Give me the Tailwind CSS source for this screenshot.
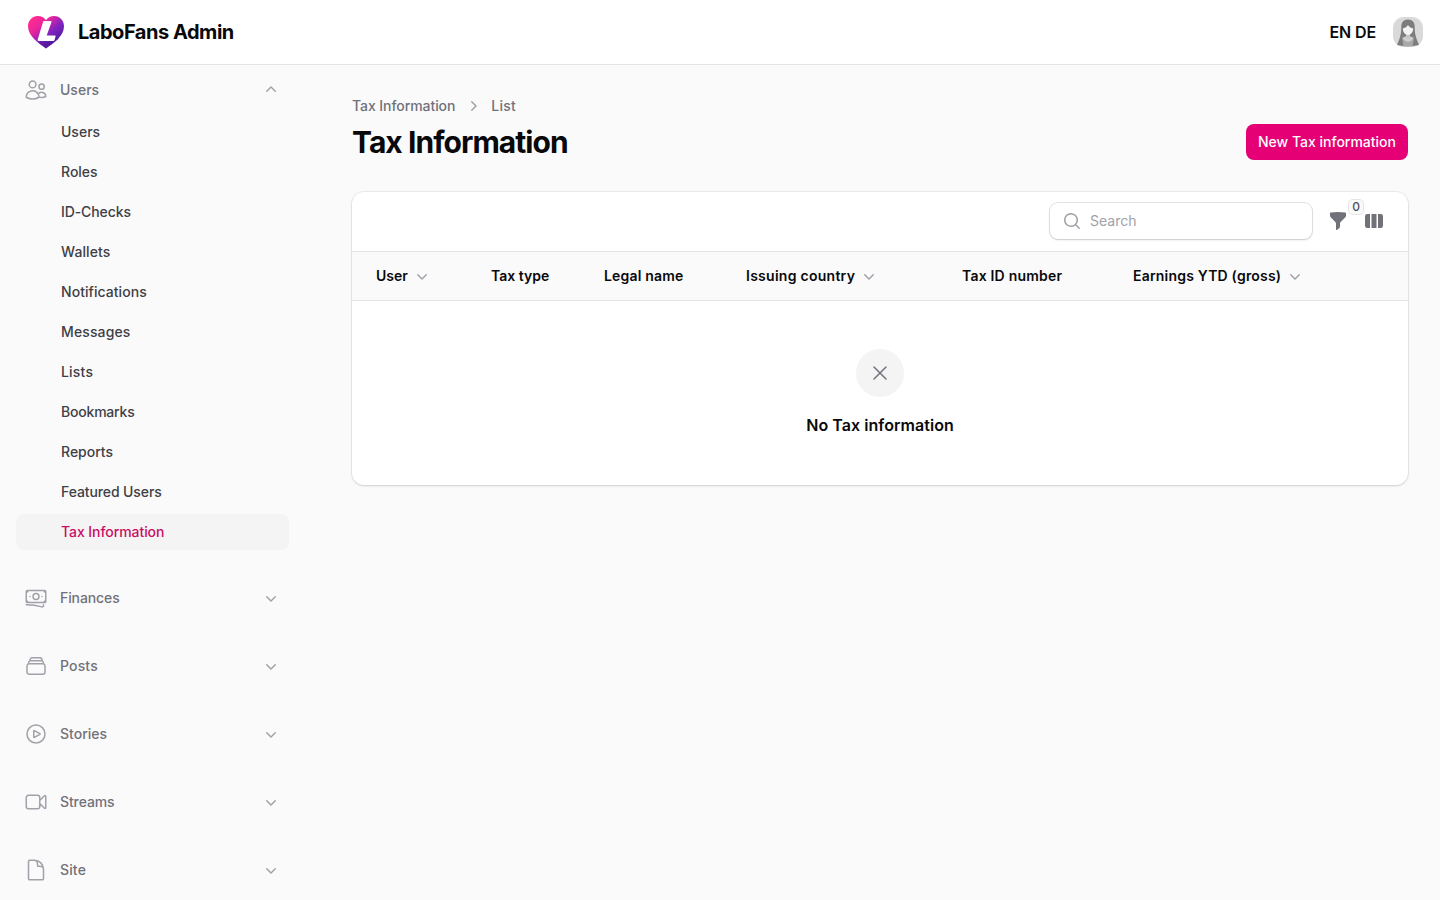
<!doctype html>
<html lang="en">
<head>
  <meta charset="UTF-8">
  <meta name="viewport" content="width=device-width, initial-scale=1.0">
  <script src="https://cdn.jsdelivr.net/npm/@tailwindcss/browser@4"></script>
  <title>Tax Information - LaboFans Admin</title>
</head>

<body class="flex h-screen flex-col overflow-hidden bg-[#fafafa] font-['Inter',sans-serif] text-[#09090b]">
  <!-- icons used more than once -->
  <svg class="hidden">
    <symbol id="chevron-down" viewBox="0 0 20 20"><path fill-rule="evenodd" d="M5.22 8.22a.75.75 0 0 1 1.06 0L10 11.94l3.72-3.72a.75.75 0 1 1 1.06 1.06l-4.25 4.25a.75.75 0 0 1-1.06 0L5.22 9.28a.75.75 0 0 1 0-1.06Z"/></symbol>
  </svg>

  <header class="z-10 flex h-[65px] shrink-0 items-center justify-between border-b border-[#e4e4e7] bg-white pr-4 pl-7">
    <a href="#" class="flex items-center gap-3.5">
      <svg class="h-[33px] w-9" viewBox="0 0 36 33">
        <defs>
          <linearGradient id="heart" x1="5" y1="3" x2="27" y2="29" gradientUnits="userSpaceOnUse">
            <stop offset="0" stop-color="#ff2b92"/>
            <stop offset=".3" stop-color="#e7269c"/>
            <stop offset=".62" stop-color="#8423c0"/>
            <stop offset="1" stop-color="#4a1d9a"/>
          </linearGradient>
        </defs>
        <path fill="url(#heart)" d="M18 32.5C11.500 27.500 0 20.500 0 10.200 0 4.300 4.300 0 9.700 0c3.500 0 6.600 1.600 8.300 4.200C19.700 1.600 22.800 0 26.300 0 31.700 0 36 4.300 36 10.200c0 10.300-11.500 17.300-18 22.300Z"/>
        <path fill="#4a1490" fill-opacity=".4" d="m10 25.500 17.500-.5 1.500-4 2 1.500C27.500 26 22.500 29.300 18 32.500c-2-1.500-5-3.600-8-5.900Z"/>
        <path fill="#fff" d="M16.300 5h6.200c1 0 1.200.5.900 1.300L18.700 19.500h7.800c.9 0 1.300.5 1 1.300l-.9 2.900c-.3.800-.8 1.300-1.700 1.300H11.200c-1.300 0-1.800-.6-1.400-1.700L15 6c.3-.7.600-1 1.300-1Z"/>
      </svg>
      <span class="text-xl leading-5 font-bold tracking-[-0.47px]">LaboFans Admin</span>
    </a>
    <div class="flex items-center gap-4">
      <span class="text-base font-semibold tracking-[-0.1px]">EN DE</span>
      <svg class="size-8" viewBox="0 0 32 32">
        <rect x="1" y="1" width="30" height="30" rx="11" fill="#d9d9d9"/>
        <path fill="#7d7d7d" d="M16 3.500c-4.500 0-6.700 3-6.700 7 0 4-.3 7.500-1.300 10.500-.8 2.500-1.500 5-3 7.500 3 2.200 19 2.200 22 0-1.500-2.500-2.200-5-3-7.500-1-3-1.300-6.500-1.300-10.500 0-4-2.200-7-6.700-7Z"/>
        <path fill="#a9a9a9" d="M10 21.500 14 20h4l4 1.500-1.500 9h-9Z"/>
        <path fill="#cfcfcf" d="M11 22c1.500 5 8.500 5 10 0l-3-1.500h-4Z"/>
        <path fill="#c4c4c4" d="M14 17h4v4.500c-1 1.500-3 1.500-4 0Z"/>
        <path fill="#f3f3f3" d="M16 9c-1 2-3 3-5.200 3.500 0 3.500 2.200 6.500 5.200 6.500s5.200-3 5.200-6.500C19 12 17 11 16 9Z"/>
      </svg>
    </div>
  </header>

  <div class="flex min-h-0 flex-1">
    <aside class="w-80 shrink-0 overflow-hidden pt-[5px] pr-[31px] pl-4">
      <nav class="flex flex-col gap-7 text-sm font-medium">
        <div class="flex flex-col gap-1">
          <div class="flex items-center gap-3 p-2 text-[#71717a]">
            <svg class="size-6 text-[#a1a1aa]" fill="none" stroke="currentColor" stroke-width="1.5" stroke-linecap="round" stroke-linejoin="round" viewBox="0 0 24 24"><path d="M15 19.128a9.380 9.380 0 0 0 2.625.372 9.337 9.337 0 0 0 4.121-.952 4.125 4.125 0 0 0-7.533-2.493M15 19.128v-.003c0-1.113-.285-2.160-.786-3.070M15 19.128v.106A12.318 12.318 0 0 1 8.624 21c-2.331 0-4.512-.645-6.374-1.766l-.001-.109a6.375 6.375 0 0 1 11.964-3.070M12 6.375a3.375 3.375 0 1 1-6.750 0 3.375 3.375 0 0 1 6.750 0Zm8.250 2.250a2.625 2.625 0 1 1-5.250 0 2.625 2.625 0 0 1 5.250 0Z"/></svg>
            <span class="flex-1">Users</span>
            <svg class="size-5 text-[#a1a1aa]" fill="currentColor" viewBox="0 0 20 20"><path d="M9.470 6.470a.75.75 0 0 1 1.060 0l4.250 4.250a.75.75 0 1 1-1.060 1.060L10 8.060l-3.720 3.720a.75.75 0 0 1-1.060-1.060l4.250-4.250Z"/></svg>
          </div>
          <ul class="flex flex-col gap-1 text-[#3f3f46]">
            <li class="rounded-lg py-2 pl-[45px]">Users</li>
            <li class="rounded-lg py-2 pl-[45px]">Roles</li>
            <li class="rounded-lg py-2 pl-[45px] tracking-[-0.1px]">ID-Checks</li>
            <li class="rounded-lg py-2 pl-[45px] tracking-[0.1px]">Wallets</li>
            <li class="rounded-lg py-2 pl-[45px] tracking-[0.05px]">Notifications</li>
            <li class="rounded-lg py-2 pl-[45px] tracking-[0.12px]">Messages</li>
            <li class="rounded-lg py-2 pl-[45px] tracking-[0.2px]">Lists</li>
            <li class="rounded-lg py-2 pl-[45px] tracking-[-0.2px]">Bookmarks</li>
            <li class="rounded-lg py-2 pl-[45px]">Reports</li>
            <li class="rounded-lg py-2 pl-[45px] tracking-[-0.1px]">Featured Users</li>
            <li class="rounded-lg bg-[#f4f4f5] py-2 pl-[45px] tracking-[-0.07px] text-[#cb0c64]">Tax Information</li>
          </ul>
        </div>

        <div class="flex items-center gap-3 p-2 text-[#71717a]">
          <svg class="size-6 text-[#a1a1aa]" fill="none" stroke="currentColor" stroke-width="1.5" stroke-linecap="round" stroke-linejoin="round" viewBox="0 0 24 24"><path d="M2.250 18.750a60.070 60.070 0 0 1 15.797 2.101c.727.198 1.453-.342 1.453-1.096V18.750M3.750 4.500v.75A.75.75 0 0 1 3 6h-.75m0 0v-.375c0-.621.504-1.125 1.125-1.125H20.250M2.250 6v9m18-10.500v.75c0 .414.336.75.75.75h.75m-1.500-1.500h.375c.621 0 1.125.504 1.125 1.125v9.750c0 .621-.504 1.125-1.125 1.125h-.375m1.500-1.500H21a.75.75 0 0 0-.75.75v.75m0 0H3.750m0 0h-.375a1.125 1.125 0 0 1-1.125-1.125V15m1.500 1.500v-.75A.75.75 0 0 0 3 15h-.75M15 10.500a3 3 0 1 1-6 0 3 3 0 0 1 6 0Zm3 0h.008v.008H18V10.500Zm-12 0h.008v.008H6V10.500Z"/></svg>
          <span class="flex-1 tracking-[-0.1px]">Finances</span>
          <svg class="size-5 text-[#a1a1aa]" fill="currentColor"><use href="#chevron-down"/></svg>
        </div>

        <div class="flex items-center gap-3 p-2 text-[#71717a]">
          <svg class="size-6 text-[#a1a1aa]" fill="none" stroke="currentColor" stroke-width="1.5" stroke-linecap="round" stroke-linejoin="round" viewBox="0 0 24 24"><path d="M6 6.878V6a2.250 2.250 0 0 1 2.250-2.250h7.500A2.250 2.250 0 0 1 18 6v.878m-12 0c.235-.083.487-.128.75-.128h10.500c.263 0 .515.045.75.128m-12 0A2.250 2.250 0 0 0 4.500 9v.878m13.500-3A2.250 2.250 0 0 1 19.500 9v.878m0 0a2.246 2.246 0 0 0-.75-.128H5.250c-.263 0-.515.045-.75.128m15 0A2.250 2.250 0 0 1 21 12v6a2.250 2.250 0 0 1-2.250 2.250H5.250A2.250 2.250 0 0 1 3 18v-6c0-.98.626-1.813 1.500-2.122"/></svg>
          <span class="flex-1 tracking-[0.15px]">Posts</span>
          <svg class="size-5 text-[#a1a1aa]" fill="currentColor"><use href="#chevron-down"/></svg>
        </div>

        <div class="flex items-center gap-3 p-2 text-[#71717a]">
          <svg class="size-6 text-[#a1a1aa]" fill="none" stroke="currentColor" stroke-width="1.5" stroke-linecap="round" stroke-linejoin="round" viewBox="0 0 24 24"><path d="M21 12a9 9 0 1 1-18 0 9 9 0 0 1 18 0Z"/><path d="M15.910 11.672a.375.375 0 0 1 0 .656l-5.603 3.113a.375.375 0 0 1-.557-.328V8.887c0-.286.307-.466.557-.327l5.603 3.112Z"/></svg>
          <span class="flex-1">Stories</span>
          <svg class="size-5 text-[#a1a1aa]" fill="currentColor"><use href="#chevron-down"/></svg>
        </div>

        <div class="flex items-center gap-3 p-2 text-[#71717a]">
          <svg class="size-6 text-[#a1a1aa]" fill="none" stroke="currentColor" stroke-width="1.5" stroke-linecap="round" stroke-linejoin="round" viewBox="0 0 24 24"><path d="m15.750 10.500 4.720-4.720a.75.75 0 0 1 1.280.53v11.380a.75.75 0 0 1-1.280.53l-4.720-4.720M4.500 18.750h9a2.250 2.250 0 0 0 2.250-2.250v-9a2.250 2.250 0 0 0-2.250-2.250h-9A2.250 2.250 0 0 0 2.250 7.500v9a2.250 2.250 0 0 0 2.250 2.250Z"/></svg>
          <span class="flex-1 tracking-[-0.1px]">Streams</span>
          <svg class="size-5 text-[#a1a1aa]" fill="currentColor"><use href="#chevron-down"/></svg>
        </div>

        <div class="flex items-center gap-3 p-2 text-[#71717a]">
          <svg class="size-6 text-[#a1a1aa]" fill="none" stroke="currentColor" stroke-width="1.5" stroke-linecap="round" stroke-linejoin="round" viewBox="0 0 24 24"><path d="M19.500 11.250a9 9 0 0 0-9-9M19.500 11.250v9.375c0 .621-.504 1.125-1.125 1.125H5.625A1.125 1.125 0 0 1 4.500 20.625V3.375c0-.621.504-1.125 1.125-1.125H10.500M19.500 11.625a3.375 3.375 0 0 0-3.375-3.375h-1.500A1.125 1.125 0 0 1 13.500 7.125v-1.500a3.375 3.375 0 0 0-3.375-3.375"/></svg>
          <span class="flex-1 tracking-[0.15px]">Site</span>
          <svg class="size-5 text-[#a1a1aa]" fill="currentColor"><use href="#chevron-down"/></svg>
        </div>
      </nav>
    </aside>

    <main class="flex flex-1 flex-col gap-8 px-8 pt-[31px]">
      <div class="flex items-end justify-between">
        <div>
          <nav class="mb-2 flex items-center gap-2 text-sm font-medium tracking-[-0.07px] text-[#71717a]">
            <a href="#">Tax Information</a>
            <svg class="size-5 text-[#a1a1aa]" fill="currentColor" viewBox="0 0 20 20"><path d="M8.220 5.220a.75.75 0 0 1 1.060 0l4.250 4.250a.75.75 0 0 1 0 1.060l-4.250 4.250a.75.75 0 0 1-1.060-1.060L11.940 10 8.220 6.280a.75.75 0 0 1 0-1.060Z"/></svg>
            <a href="#" class="tracking-[0.2px]">List</a>
          </nav>
          <h1 class="text-3xl font-bold tracking-[-0.95px]">Tax Information</h1>
        </div>
        <button class="h-9 rounded-lg bg-[#e60076] px-3 text-sm font-medium text-white">New Tax information</button>
      </div>

      <section class="rounded-xl bg-white shadow-sm ring-1 ring-[#09090b]/5">
        <div class="flex h-[59px] items-center justify-end gap-4 px-6 pb-px">
          <label class="flex h-9 w-[262px] items-center gap-2 rounded-lg bg-white pl-3 shadow-sm ring-1 ring-[#09090b]/10">
            <svg class="size-5 shrink-0 text-[#a1a1aa]" fill="currentColor" viewBox="0 0 20 20"><path fill-rule="evenodd" d="M9 3.500a5.500 5.500 0 1 0 0 11 5.500 5.500 0 0 0 0-11ZM2 9a7 7 0 1 1 12.452 4.391l3.328 3.329a.75.75 0 1 1-1.060 1.060l-3.329-3.328A7 7 0 0 1 2 9Z"/></svg>
            <input class="w-full min-w-0 text-sm outline-none placeholder:text-[#a1a1aa]" placeholder="Search">
          </label>
          <button class="relative size-5 text-[#71717a]">
            <svg class="size-5" fill="currentColor" viewBox="0 0 20 20"><path d="M2.628 1.601C5.028 1.206 7.490 1 10 1s4.973.206 7.372.601a.75.75 0 0 1 .628.74v2.288a2.250 2.250 0 0 1-.659 1.590l-4.682 4.683a2.250 2.250 0 0 0-.659 1.590v3.037c0 .684-.31 1.330-.844 1.757l-1.937 1.550A.75.75 0 0 1 8 18.250v-5.757a2.250 2.250 0 0 0-.659-1.591L2.659 6.220A2.250 2.250 0 0 1 2 4.629V2.340a.75.75 0 0 1 .628-.74Z"/></svg>
            <span class="absolute -top-[11px] left-[21px] flex h-3.5 w-3.5 items-center justify-center rounded bg-[#fafafa] text-xs font-medium text-[#52525c] ring-1 ring-[#52525c]/15">0</span>
          </button>
          <svg class="size-5 text-[#71717a]" fill="currentColor" viewBox="0 0 20 20"><path d="M14 17h2.750A2.250 2.250 0 0 0 19 14.750v-9.500A2.250 2.250 0 0 0 16.750 3H14v14ZM12.500 3h-5v14h5V3ZM3.250 3H6v14H3.250A2.250 2.250 0 0 1 1 14.750v-9.500A2.250 2.250 0 0 1 3.250 3Z"/></svg>
        </div>

        <div class="grid h-[50px] grid-cols-[115px_113px_142px_216px_171px_1fr] items-center border-y border-[#e4e4e7] bg-[#fafafa] pl-6 text-sm font-semibold">
          <span class="flex items-center gap-1">User <svg class="size-5 text-[#a1a1aa]" fill="currentColor"><use href="#chevron-down"/></svg></span>
          <span>Tax type</span>
          <span class="tracking-[0.17px]">Legal name</span>
          <span class="flex items-center gap-1 tracking-[0.27px]">Issuing country <svg class="size-5 text-[#a1a1aa]" fill="currentColor"><use href="#chevron-down"/></svg></span>
          <span class="tracking-[0.2px]">Tax ID number</span>
          <span class="flex items-center gap-1 tracking-[0.2px]">Earnings YTD (gross) <svg class="size-5 text-[#a1a1aa]" fill="currentColor"><use href="#chevron-down"/></svg></span>
        </div>

        <div class="flex flex-col items-center gap-4 py-12">
          <div class="rounded-full bg-[#f4f4f5] p-3">
            <svg class="size-6 text-[#71717a]" fill="none" stroke="currentColor" stroke-width="1.5" stroke-linecap="round" stroke-linejoin="round" viewBox="0 0 24 24"><path d="M6 18 18 6M6 6l12 12"/></svg>
          </div>
          <h4 class="text-base leading-6 font-semibold tracking-[0.05px]">No Tax information</h4>
        </div>
      </section>
    </main>
  </div>
</body>
</html>
